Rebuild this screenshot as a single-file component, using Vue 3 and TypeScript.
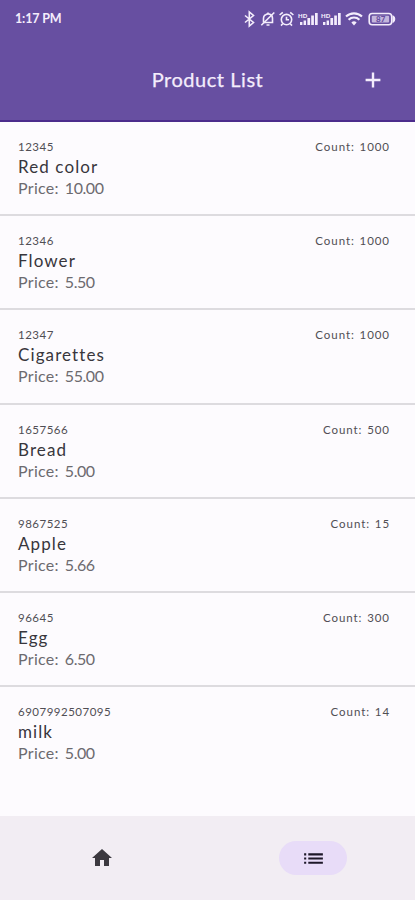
<script setup lang="ts">
interface Product {
  code: string
  name: string
  price: string
  count: number
}

const products: Product[] = [
  { code: '12345', name: 'Red color', price: '10.00', count: 1000 },
  { code: '12346', name: 'Flower', price: '5.50', count: 1000 },
  { code: '12347', name: 'Cigarettes', price: '55.00', count: 1000 },
  { code: '1657566', name: 'Bread', price: '5.00', count: 500 },
  { code: '9867525', name: 'Apple', price: '5.66', count: 15 },
  { code: '96645', name: 'Egg', price: '6.50', count: 300 },
  { code: '6907992507095', name: 'milk', price: '5.00', count: 14 },
]
</script>

<template>
  <div class="screen">
    <header class="header">
      <div class="status">
        <span class="time">1:17 PM</span>
        <svg class="status-icons" width="154" height="18" viewBox="0 0 154 18" fill="none" stroke="currentColor" stroke-width="1.6">
          <path d="M1 5.5 9.5 12.5 5.3 16V2l4.2 3.5L1 12.5" />
          <g>
            <path d="M19.5 12.5h9V8.2a4.3 4.3 0 0 0-7.4-3M19.5 12.5V8.2c0-1.3.6-2.5 1.6-3.3M22.5 15h3M24 3.8V2.4" />
            <path d="m17.3 15.3 13-12.8" />
          </g>
          <circle cx="42.5" cy="9.6" r="5.2" />
          <path d="M42.5 6.8v3h2.5M35.6 5l3.2-2.7M49.4 5l-3.2-2.7M38.7 13.8 37 15.6M46.3 13.8l1.7 1.8" />
          <g fill="currentColor" stroke="none">
            <path d="M56 12h2.4v3H56zM59.6 10.5H62V15h-2.4zM63.4 8h2.7v7h-2.7zM67.2 5.5h2.7V15h-2.7zM71 3h2.7v12H71z" />
            <path d="M79 12h2.4v3H79zM82.6 10.5H85V15h-2.4zM86.4 8h2.7v7h-2.7zM90.2 5.5h2.7V15h-2.7zM94 3h2.7v12H94z" />
            <text class="hd" x="54" y="7.5">HD</text>
            <text class="hd" x="77" y="7.5">HD</text>
            <path d="m110 15.5-2.6-3a3.7 3.7 0 0 1 5.2 0z" />
          </g>
          <path d="M102 6.6a11.5 11.5 0 0 1 16 0M104.6 9.7a7.8 7.8 0 0 1 10.8 0" stroke-width="2.1" />
          <rect x="125.2" y="3.5" width="22.5" height="11.2" rx="3" />
          <path d="M149.3 6.5c1.6.8 1.6 4.4 0 5.2z" fill="currentColor" />
          <rect x="127.8" y="5.8" width="17.3" height="6.6" rx="1" fill="currentColor" stroke="none" opacity=".65" />
          <text class="battery" x="132" y="12">87</text>
        </svg>
      </div>
      <div class="toolbar">
        <h1 class="title">Product List</h1>
        <button class="add" aria-label="Add product">
          <svg width="16" height="16" viewBox="0 0 16 16"><path d="M8 .6v14.8M.6 8h14.8" stroke="currentColor" stroke-width="2.4" /></svg>
        </button>
      </div>
    </header>

    <main class="list">
      <article v-for="p in products" :key="p.code" class="row">
        <div class="info">
          <span class="code">{{ p.code }}</span>
          <span class="name">{{ p.name }}</span>
          <span class="price">Price: <span class="amount">{{ p.price }}</span></span>
        </div>
        <span class="count">Count: {{ p.count }}</span>
      </article>
    </main>

    <nav class="nav">
      <div class="tabs">
        <button class="tab" aria-label="Home">
          <svg width="24" height="24" viewBox="0 0 24 24" fill="currentColor"><path d="M10 20v-6h4v6h5v-8h3L12 3 2 12h3v8z" /></svg>
        </button>
        <button class="tab active" aria-label="Products">
          <svg width="25" height="25" viewBox="0 0 24 24" fill="currentColor"><path d="M3 13h2v-2H3zm0 4h2v-2H3zm0-8h2V7H3zm4 4h14v-2H7zm0 4h14v-2H7zM7 7v2h14V7z" /></svg>
        </button>
      </div>
    </nav>
  </div>
</template>

<style>
body {
  margin: 0;
  background: #fdfbfe;
}
</style>

<style scoped>
.screen {
  display: flex;
  flex-direction: column;
  height: 900px;
  overflow: hidden;
  background: #fdfbfe;
  font-family: Lato, "Liberation Sans", sans-serif;
}
.header {
  box-sizing: border-box;
  flex: none;
  height: 122px;
  background: #674fa1;
  border-bottom: 2px solid #4c2c8c;
  color: #f4edfc;
}
.status {
  display: flex;
  justify-content: space-between;
  align-items: center;
  height: 38px;
  padding: 0 17px 0 15px;
}
.time {
  font-size: 12.5px;
  font-weight: 700;
  line-height: 18px;
  letter-spacing: -0.15px;
}
.hd {
  font-size: 6px;
  font-weight: 900;
}
.battery {
  font-size: 8px;
  font-weight: 900;
  fill: #674fa1;
  stroke: none;
}
.toolbar {
  display: grid;
  grid-template-columns: 84px 1fr 84px;
  align-items: center;
  height: 84px;
}
.title {
  grid-column: 2;
  margin: 0;
  padding-bottom: 2px;
  font-size: 20px;
  font-weight: 400;
  line-height: 28px;
  text-align: center;
  letter-spacing: 0.55px;
  -webkit-text-stroke: 0.25px currentColor;
}
.add,
.tab {
  display: flex;
  align-items: center;
  justify-content: center;
  padding: 0;
  border: 0;
  background: none;
  color: inherit;
}
.list {
  flex: 1;
  min-height: 0;
}
.row {
  box-sizing: border-box;
  display: flex;
  justify-content: space-between;
  align-items: flex-start;
  height: 94.2px;
  padding: 17px 25px 0 18px;
  border-bottom: 2px solid #dddbdf;
}
.row:last-child {
  border-bottom: 0;
}
.info {
  display: flex;
  flex-direction: column;
}
.code,
.count {
  font-size: 11.5px;
  line-height: 16px;
  letter-spacing: 0.5px;
  color: #504e54;
}
.count {
  letter-spacing: 0.95px;
  word-spacing: 0.8px;
}
.name {
  font-size: 17px;
  line-height: 24px;
  letter-spacing: 1.1px;
  color: #38363c;
}
.price {
  margin-top: -1px;
  font-size: 16px;
  line-height: 19px;
  letter-spacing: 0.3px;
  word-spacing: 1.6px;
  color: #6c6a6f;
}
.amount {
  letter-spacing: -0.45px;
}
.nav {
  flex: none;
  height: 84px;
  background: #f2edf3;
  color: #3c393f;
}
.tabs {
  display: grid;
  grid-template-columns: 1fr 1fr;
  align-items: center;
  justify-items: center;
  height: 84px;
  margin: 0 -4px;
}
.tab {
  width: 68px;
  height: 34px;
  border-radius: 17px;
}
.active {
  background: #e8dcf8;
  color: #1d1728;
}
</style>
